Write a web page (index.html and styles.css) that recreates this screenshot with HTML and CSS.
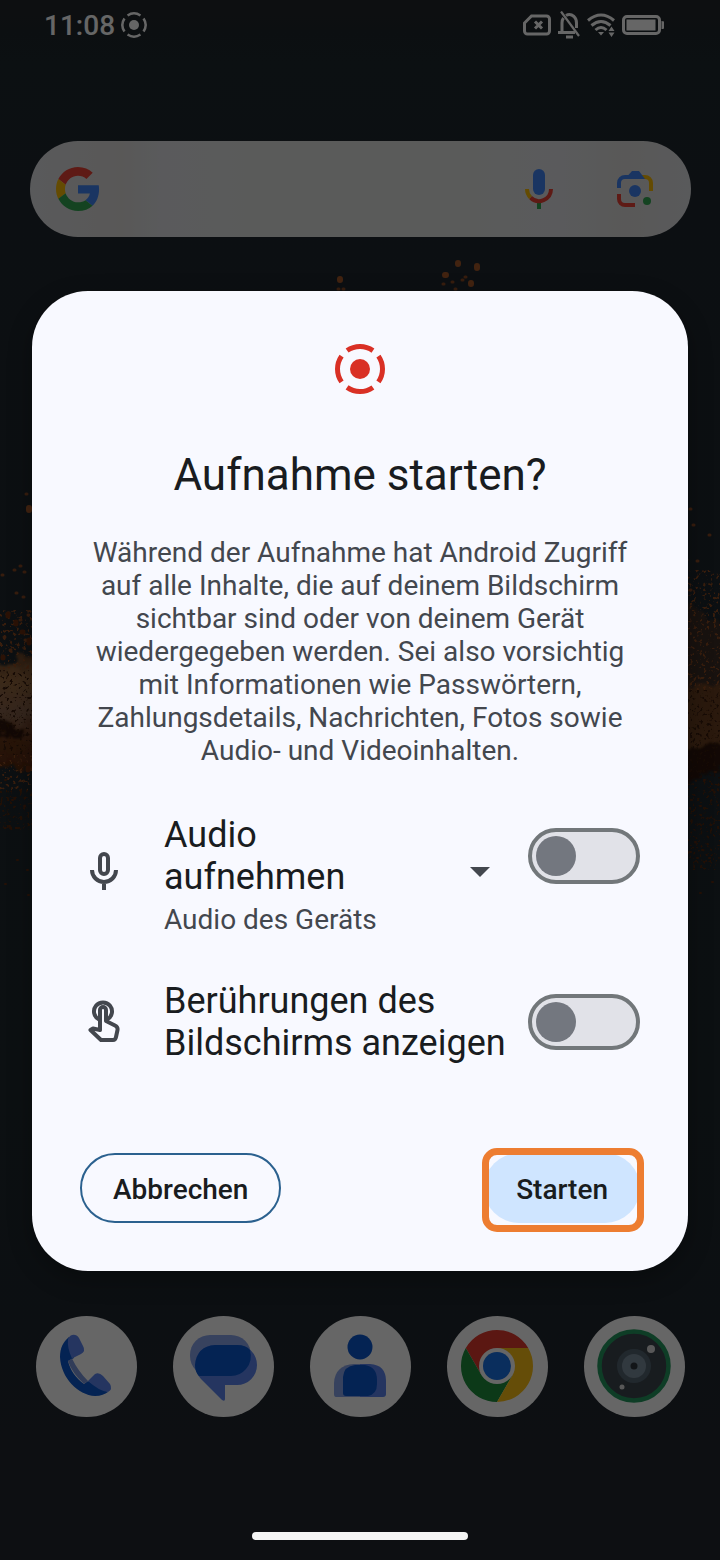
FILE: index.html
```
<!DOCTYPE html>
<html lang="de">
<head>
	<meta charset="UTF-8">
	<meta name="viewport" content="width=device-width, initial-scale=1">
	<title>Aufnahme starten?</title>
	<link rel="stylesheet" href="styles.css">
</head>
<body>
<div class="home">
	<svg class="wallpaper" viewBox="0 0 720 1560" preserveAspectRatio="none" aria-hidden="true">
		<defs>
			<linearGradient id="smoke" x1="0" y1="0" x2="0" y2="1">
				<stop offset="0" stop-color="#5c3a20"/>
				<stop offset=".25" stop-color="#96683f"/>
				<stop offset=".55" stop-color="#84604a"/>
				<stop offset=".75" stop-color="#66351a"/>
				<stop offset="1" stop-color="#57290f"/>
			</linearGradient>
			<filter id="rough" x="-20%" y="-20%" width="140%" height="140%">
				<feTurbulence type="fractalNoise" baseFrequency=".12" numOctaves="3" seed="4"/>
				<feDisplacementMap in="SourceGraphic" scale="18" xChannelSelector="R" yChannelSelector="G"/>
				<feGaussianBlur stdDeviation="1"/>
			</filter>
			<filter id="specks" x="0" y="0" width="100%" height="100%">
				<feTurbulence type="fractalNoise" baseFrequency=".3" numOctaves="2" seed="9"/>
				<feColorMatrix values="0 0 0 0 0  0 0 0 0 0  0 0 0 0 0  9 0 0 0 -5.3"/>
				<feComposite in="SourceGraphic" operator="in"/>
			</filter>
		</defs>
		<g filter="url(#rough)">
			<path fill="url(#smoke)" d="M-20 668L10 664L20 656L60 650V768H-20z"/>
			<path fill="#2e190c" d="M-20 724L8 720L16 730L24 732L24 736H-20z"/>
			<path fill="#3d2f26" d="M670 590L694 606L706 618L740 626V690H670z"/>
			<path fill="#6b4023" d="M670 682L740 690V742L670 760z"/>
			<path fill="#2e1808" d="M670 748L740 742V760L700 775L670 792z"/>
		</g>
		<g filter="url(#specks)">
			<path fill="#8f4c24" d="M0 610H32V670H0zM0 755H32V790H0zM688 570H720V690H688z"/>
			<path fill="#3a1d0c" d="M0 670H32V755H0zM688 690H720V780H688z"/>
			<path fill="#57290f" d="M688 780H720V870H688zM0 790H32V830H0z"/>
		</g>
		<!-- sparks -->
		<g fill="none" stroke-linecap="round">
			<path stroke="#a5582a" stroke-width="6" d="M340 279v1M458 263v1M477 266v2M445 275h1M471 283v1M29 508v2"/>
			<path stroke="#8a4a24" stroke-width="3" d="M338 289h1M343 289h1M443 284h1M452 282h1M462 280h1M465 277h1M455 289h1M26 494h1M20 566h1M14 570h1M2 575h1M24 572h1M16 593h1M23 597h1M8 613h1M20 620h1M28 615h1M15 624h1M4 637h1M10 650h1M25 640h1M690 509h1M693 525h1M709 535h1M697 561h1M690 590h1M686 560h1"/>
			<path stroke="#6b2f10" stroke-width="5" d="M8 614v2M16 622v2M29 640v3M3 657v1M22 632h1M28 768v2"/>
			<path stroke="#5c2a10" stroke-width="2" d="M5 780h1M20 790h1M12 800h1M24 806h1M9 826h1M16 828h1M5 884h1M17 860h1M28 895h1M27 870h1M691 800h1M700 806h1M712 790h1M695 842h1M702 850h1M709 858h1M697 858h1M690 852h1M712 882h1M700 893h1M704 780h1M715 772h1"/>
		</g>
	</svg>

	<header class="status-bar">
		<div class="status-time">
			<span>11:08</span>
			<svg width="26" height="26" viewBox="-26 -26 52 52" aria-hidden="true">
				<circle r="10" fill="#fff"/>
				<circle r="23" fill="none" stroke="#fff" stroke-width="5" pathLength="360" stroke-dasharray="68 22" transform="rotate(-34)"/>
			</svg>
		</div>
		<div class="status-icons">
			<svg width="28" height="22" viewBox="0 0 28 22" fill="none" stroke="#fff" stroke-width="3" aria-hidden="true">
				<path d="M8.500 2H23.500a3 3 0 0 1 3 3V17a3 3 0 0 1-3 3H4.500a3 3 0 0 1-3-3V9z"/>
				<path d="M12 7.500l7 7M19 7.500l-7 7"/>
			</svg>
			<svg width="22" height="28" viewBox="0 0 22 28" fill="none" stroke="#fff" stroke-width="3" aria-hidden="true">
				<path d="M0 21.500H17M4 21V12Q4 9 5.500 7M8 4.500Q12 2 16 5.500Q18.500 8 18.500 12V17"/>
				<path d="M3 .5L21 25" stroke-width="2.200"/>
				<path d="M8 26h7"/>
			</svg>
			<svg width="28" height="24" viewBox="0 0 28 24" fill="none" stroke="#fff" stroke-width="3" aria-hidden="true">
				<path d="M1 7.500Q14-3.500 27 7.500M4.500 12.500Q14 4.500 23.500 12.500M8.500 17Q14 12 19.500 17"/>
				<path d="M11 19h6l-3 3.500zM21.500 18h6L24.500 13.500zM21.500 19.500h6l-3 4.500z" fill="#fff" stroke="none"/>
			</svg>
			<svg width="42" height="20" viewBox="0 0 42 20" aria-hidden="true">
				<rect x="1.500" y="1.500" width="36" height="17" rx="3.500" fill="none" stroke="#fff" stroke-width="3"/>
				<rect x="4.500" y="4.500" width="29" height="11" fill="#fff"/>
				<path d="M39.500 6a4 4 0 0 1 0 8z" fill="#fff"/>
			</svg>
		</div>
	</header>

	<div class="search">
		<svg width="44" height="44" viewBox="0 0 48 48" aria-hidden="true">
			<path fill="#ea4335" d="M24 9.500c3.540 0 6.710 1.220 9.210 3.600l6.850-6.850C35.900 2.380 30.470 0 24 0 14.620 0 6.510 5.380 2.560 13.220l7.980 6.190C12.430 13.720 17.740 9.500 24 9.500z"/>
			<path fill="#4285f4" d="M46.980 24.550c0-1.570-.15-3.090-.38-4.550H24v9.020h12.940c-.58 2.960-2.260 5.480-4.780 7.180l7.730 6c4.510-4.180 7.090-10.360 7.090-17.650z"/>
			<path fill="#fbbc05" d="M10.530 28.590c-.48-1.450-.76-2.990-.76-4.590s.27-3.140.76-4.590l-7.980-6.190C.92 16.460 0 20.120 0 24c0 3.880.92 7.540 2.560 10.780l7.970-6.190z"/>
			<path fill="#34a853" d="M24 48c6.480 0 11.930-2.130 15.890-5.810l-7.730-6c-2.150 1.450-4.920 2.300-8.160 2.300-6.260 0-11.570-4.220-13.470-9.910l-7.980 6.190C6.510 42.620 14.620 48 24 48z"/>
		</svg>
		<div class="search-tools">
			<svg width="28" height="40" viewBox="0 0 28 40" fill="none" stroke-width="4" aria-hidden="true">
				<rect x="8" width="12" height="26" rx="6" fill="#4285f4"/>
				<path stroke="#34a853" d="M14 34v6"/>
				<path stroke="#ea4335" d="M26 20a12 12 0 0 1-20.500 8.500"/>
				<path stroke="#fbbc05" d="M2 20a12 12 0 0 0 3.500 8.500"/>
			</svg>
			<svg width="36" height="36" viewBox="0 0 36 36" fill="none" stroke-width="4" aria-hidden="true">
				<path stroke="#fbbc05" d="M24 6h4a6 6 0 0 1 6 6v8"/>
				<path stroke="#4285f4" d="M2 17v-5a6 6 0 0 1 6-6h6"/>
				<path fill="#4285f4" d="M11 4.500L15 0h7l6 8H11z"/>
				<path stroke="#ea4335" d="M2 23v5a6 6 0 0 0 6 6h10"/>
				<circle cx="18" cy="20" r="6" fill="#4285f4"/>
				<circle cx="30" cy="30" r="4" fill="#34a853"/>
			</svg>
		</div>
	</div>

	<nav class="dock" aria-label="Apps">
		<a class="app" href="#telefon" aria-label="Telefon">
			<svg viewBox="0 0 101 101" aria-hidden="true">
				<path fill="#0b57d0" d="M33 21C27 26 24 32 24 41C25 62 42 79 59 80C65 80 69 78 72 76L52 65L48 68C40 62 34 54 32 45L38 42z"/>
				<path fill="#5c86f0" d="M32 23C34 18 40 17 43 22L47 30Q50 35 45 38L36 42.500Q31 32 32 23z"/>
				<path fill="#5c86f0" d="M52 65L59 58Q63 56 67 60L74 68Q77 73 72 76Q63 75 52 65z"/>
				<path fill="#7a97dc" d="M36 42.500Q42 55 52 65L48 68Q36 57 32 45z"/>
			</svg>
		</a>
		<a class="app" href="#nachrichten" aria-label="Nachrichten">
			<svg viewBox="0 0 101 101" aria-hidden="true">
				<rect x="17" y="19" width="61" height="41" rx="20" fill="#8aa5ea"/>
				<path fill="#5c86f0" d="M42 29H64a20 20 0 0 1 0 40H52V83Q52 86 49 84L28 63Q22 56 22 49A20 20 0 0 1 42 29z"/>
				<path fill="#0b57d0" d="M42 29H64Q73 29 77 34Q80 45 73 53Q67 60 58 60H26Q22 56 22 49Q24 30 42 29z"/>
			</svg>
		</a>
		<a class="app" href="#kontakte" aria-label="Kontakte">
			<svg viewBox="0 0 101 101" aria-hidden="true">
				<circle cx="50" cy="31" r="12.500" fill="#0b57d0"/>
				<path fill="#8aa5ea" d="M44 48H58V81H26Q24 81 24 78V67Q25 49 44 48z"/>
				<path fill="#5c86f0" d="M50 48H60Q76 49 76 65V78Q76 81 73 81H50z"/>
				<path fill="#0b57d0" d="M45 49H55Q67 51 67 64V68Q67 78 58 80H36Q33 80 33 77V61Q34 50 45 49z"/>
			</svg>
		</a>
		<a class="app" href="#chrome" aria-label="Chrome">
			<svg viewBox="0 0 101 101" aria-hidden="true">
				<path fill="#e33b2e" d="M50 32H81.200A36 36 0 0 0 18.800 32L34.400 59L50 50z"/>
				<path fill="#1e8e3e" d="M18.800 32A36 36 0 0 0 50 86L65.600 59L50 50L34.400 59z"/>
				<path fill="#fcc016" d="M81.200 32A36 36 0 0 1 50 86L65.600 59L50 50V32z"/>
				<circle cx="50" cy="50" r="18" fill="#fff"/>
				<circle cx="50" cy="50" r="14" fill="#1a73e8"/>
			</svg>
		</a>
		<a class="app" href="#kamera" aria-label="Kamera">
			<svg viewBox="0 0 101 101" aria-hidden="true">
				<circle cx="50" cy="50" r="34.500" fill="#3e474e" stroke="#259a60" stroke-width="4.500"/>
				<circle cx="50" cy="50" r="17" fill="#536472"/>
				<circle cx="50" cy="50" r="12" fill="#7c8e9d"/>
				<circle cx="50" cy="50" r="3.500" fill="#2e363d"/>
				<circle cx="67" cy="33" r="4" fill="#ddd"/>
				<circle cx="38" cy="71" r="2.500" fill="#ddd"/>
			</svg>
		</a>
	</nav>
</div>

<div class="scrim">
	<form class="dialog" role="dialog" aria-labelledby="title" aria-describedby="text">
		<svg class="dialog-icon" width="50" height="50" viewBox="-25 -25 50 50" aria-hidden="true">
			<circle r="10" fill="#d93025"/>
			<circle r="22.500" fill="none" stroke="#d93025" stroke-width="5" pathLength="360" stroke-dasharray="70 20" transform="rotate(-35)"/>
		</svg>
		<h1 class="dialog-title" id="title">Aufnahme starten?</h1>
		<p class="dialog-text" id="text">Während der Aufnahme hat Android Zugriff auf alle Inhalte, die auf deinem Bildschirm sichtbar sind oder von deinem Gerät wiedergegeben werden. Sei also vorsichtig mit Informationen wie Passwörtern, Zahlungsdetails, Nachrichten, Fotos sowie Audio- und Videoinhalten.</p>

		<div class="options">
			<div class="option">
				<svg class="option-icon" width="28" height="38" viewBox="0 0 28 38" fill="none" stroke="#43474e" stroke-width="4" aria-hidden="true">
					<rect x="10" y="2" width="8" height="20" rx="4"/>
					<path d="M2 18a12 12 0 0 0 24 0M14 30v8"/>
				</svg>
				<div class="spinner">
					<select class="spinner-select" id="source" aria-label="Audioquelle">
						<option>Audio des Geräts</option>
						<option>Mikrofon</option>
					</select>
					<label class="option-label spinner-label" for="audio">Audio aufnehmen</label>
					<svg class="spinner-arrow" width="20" height="10" viewBox="0 0 20 10" aria-hidden="true">
						<path d="M0 0H20L10 10z" fill="#43474e"/>
					</svg>
				</div>
				<input class="switch switch-top" type="checkbox" id="audio">
			</div>
			<div class="option">
				<svg class="option-icon" width="32" height="42" viewBox="0 0 32 42" fill="none" stroke="#43474e" stroke-width="4" stroke-linejoin="round" aria-hidden="true">
					<path d="M11 19.500A9 9 0 1 1 19 19.500"/>
					<path d="M12 30V10a3 3 0 0 1 6 0V21L27 25.500Q30 27 29.500 30L28 37Q27.500 40 25 40H13L2.500 30L5 28.500z"/>
				</svg>
				<label class="option-label" for="touches">Berührungen des Bildschirms anzeigen</label>
				<input class="switch" type="checkbox" id="touches">
			</div>
		</div>

		<div class="actions">
			<button class="btn btn-outline" type="button">Abbrechen</button>
			<div class="marked">
				<button class="btn btn-filled" type="button">Starten</button>
			</div>
		</div>
	</form>
	<div class="nav-handle"></div>
</div>
</body>
</html>
```

FILE: styles.css
```
* {
	box-sizing: border-box;
	margin: 0;
	padding: 0;
}

body {
	font-family: Roboto, "Liberation Sans", sans-serif;
	background-color: #20282e;
}

svg {
	display: block;
	flex: none;
}

/* home screen */
.home {
	position: relative;
	min-height: 100vh;
	display: flex;
	flex-direction: column;
	background: linear-gradient(#22262b, #1e282d 4%, #20272e 12%, #1e282e 70%, #22262f);
}

.wallpaper {
	position: absolute;
	top: 0;
	left: 0;
	width: 100%;
	height: 100%;
}

.status-bar {
	position: relative;
	height: 52px;
	padding: 0 56px 2px 44px;
	display: flex;
	align-items: center;
	justify-content: space-between;
	color: #fff;
	font-size: 28px;
	font-weight: 500;
}

.status-time {
	display: flex;
	align-items: center;
	gap: 6px;
}

.status-icons {
	display: flex;
	align-items: center;
	gap: 7px;
}

.search {
	position: relative;
	height: 96px;
	margin: 89px 29px 0 30px;
	padding: 0 38px 0 26px;
	display: flex;
	align-items: center;
	justify-content: space-between;
	border-radius: 48px;
	background: linear-gradient(90deg, #dfe0e4, #dedcda 14%, #e0e2e6 20%, #e1e4e1 36%, #e1e4e1 64%, #e0e2e6 80%, #dedddb 90%, #dfe0e4);
}

.search-tools {
	display: flex;
	align-items: center;
	gap: 64px;
}

.dock {
	position: relative;
	margin-top: auto;
	padding: 0 35px 143px 36px;
	display: flex;
	justify-content: space-between;
}

.app {
	width: 101px;
	height: 101px;
	border-radius: 50%;
	background-color: #fff;
}

/* dimmed layer with the dialog */
.scrim {
	position: absolute;
	top: 0;
	left: 0;
	width: 100%;
	min-height: 100%;
	padding: 2px 32px 0;
	display: flex;
	align-items: center;
	justify-content: center;
	background-color: rgba(0, 0, 0, .6);
}

.dialog {
	width: 100%;
	max-width: 720px;
	padding: 53px 48px 48px;
	border-radius: 56px;
	background-color: #f8f9ff;
	color: #191c20;
	box-shadow: 0 8px 24px rgba(0, 0, 0, .3);
}

.dialog-icon {
	margin: 0 auto;
}

.dialog-title {
	margin-top: 55px;
	font-size: 44px;
	line-height: 52px;
	font-weight: 400;
	text-align: center;
}

.dialog-text {
	margin-top: 35px;
	font-size: 28px;
	line-height: 33px;
	text-align: center;
	color: #43474e;
}

.options {
	margin-top: 41px;
	display: flex;
	flex-direction: column;
	gap: 44px;
}

.option {
	display: grid;
	grid-template-columns: 48px 1fr 112px;
	align-items: center;
}

.option-icon {
	justify-self: center;
	margin-bottom: 2px;
}

.option-label {
	padding-left: 36px;
	font-size: 36px;
	line-height: 42px;
}

/* label, select and arrow share one cell */
.spinner {
	display: grid;
}

.spinner > * {
	grid-area: 1 / 1;
}

.spinner-select {
	appearance: none;
	width: 100%;
	height: 128px;
	padding: 94px 38px 0 36px;
	border: none;
	background: none;
	font-family: inherit;
	font-size: 28px;
	line-height: 33px;
	color: #43474e;
}

.spinner-label {
	align-self: start;
	padding-top: 6px;
	padding-right: 100px;
}

.spinner-arrow {
	align-self: center;
	justify-self: end;
	margin-right: 38px;
}

.switch {
	appearance: none;
	width: 112px;
	height: 56px;
	padding: 4px;
	display: flex;
	border: 4px solid #72777a;
	border-radius: 28px;
	background-color: #e1e2e8;
	cursor: pointer;
}

.switch::before {
	content: "";
	width: 40px;
	height: 40px;
	border-radius: 50%;
	background-color: #73777f;
}

.switch:checked {
	justify-content: flex-end;
}

.switch-top {
	align-self: start;
	margin-top: 20px;
}

.actions {
	margin-top: 89px;
	display: flex;
	justify-content: space-between;
}

.btn {
	height: 70px;
	padding: 2px 32px 0;
	border: none;
	border-radius: 35px;
	font-family: inherit;
	font-size: 28px;
	font-weight: 500;
	color: #191c20;
	cursor: pointer;
}

.btn-outline {
	padding: 2px 31px 0;
	border: 2px solid #2b618f;
	background-color: transparent;
}

.btn-filled {
	background-color: #cfe5ff;
}

.marked {
	position: relative;
}

.marked::after {
	content: "";
	position: absolute;
	top: -5px;
	right: -4px;
	bottom: -9px;
	left: -2px;
	border: 7px solid #ed7d31;
	border-radius: 15px;
	pointer-events: none;
}

.nav-handle {
	position: absolute;
	bottom: 20px;
	left: 35%;
	width: 30%;
	height: 8px;
	border-radius: 4px;
	background-color: #f4f4f4;
}
```
